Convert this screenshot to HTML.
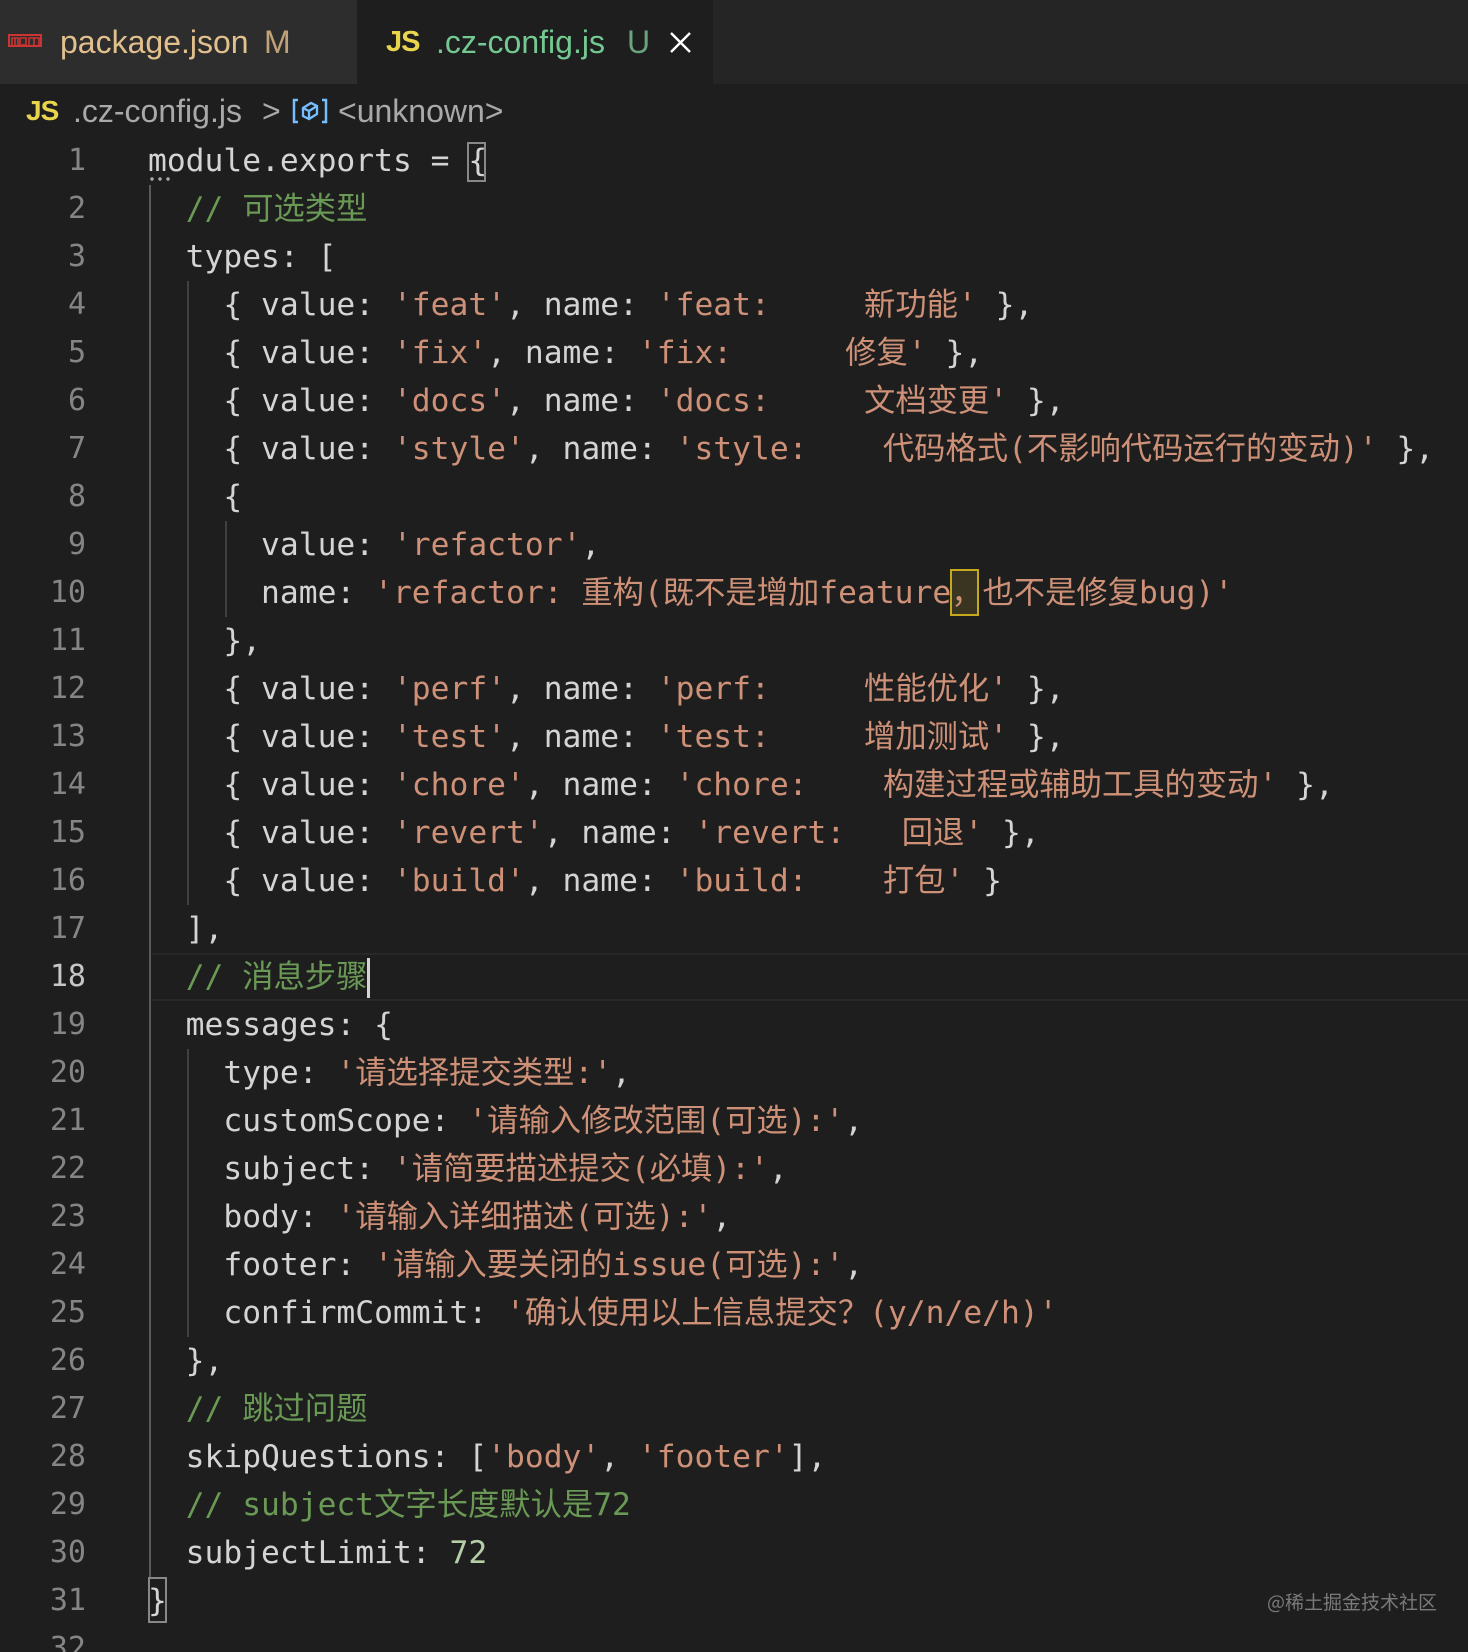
<!DOCTYPE html>
<html><head><meta charset="utf-8"><style>
*{margin:0;padding:0;box-sizing:border-box}
html,body{width:1468px;height:1652px;background:#1e1e1e;overflow:hidden}
body{position:relative;font-family:"Liberation Sans","Noto Sans CJK SC",sans-serif}
.tabbar{position:absolute;left:0;top:0;width:1468px;height:84px;background:#252526}
.tab{position:absolute;top:0;height:84px;font-size:32px;line-height:84px;white-space:nowrap}
.t1{left:0;width:357px;background:#2d2d2d}
.t2{left:357px;width:356px;background:#1e1e1e}
.bc{position:absolute;top:88px;left:0;height:46px;line-height:46px;font-size:32px;color:#a9a9a9;white-space:nowrap}
.js{font-family:"Liberation Sans",sans-serif;font-weight:bold;color:#e8d44d;letter-spacing:-1px}
.code{position:absolute;left:148px;top:137px;font-family:"DejaVu Sans Mono","Noto Sans CJK SC",monospace;font-size:31.3px;color:#d4d4d4}
.l{height:48px;line-height:48px;white-space:pre}
.ln{position:absolute;left:0;width:86px;text-align:right;font-family:"DejaVu Sans Mono",monospace;font-size:30px;color:#858585;top:137px}
.ln div{height:48px;line-height:48px}
.s{color:#ce9178}.c{color:#6a9955}.n{color:#b5cea8}
.g{position:absolute;width:2px;background:#404040}
</style></head><body>
<div class="tabbar">
 <div class="tab t1"><svg style="position:absolute;left:8px;top:34px" width="34" height="14" viewBox="0 0 34 14"><rect x="1" y="1" width="32" height="11" fill="none" stroke="#c33" stroke-width="2"/><path d="M4 11V4h6v7M7 4v7M12 13V4h6v7h-6M21 11V4h10v7M26 4v7" fill="none" stroke="#c33" stroke-width="1.6"/></svg><span style="position:absolute;left:60px;color:#e2c08d">package.json</span><span style="position:absolute;left:264px;color:#c0a27a">M</span></div>
 <div class="tab t2"><span class="js" style="position:absolute;left:29px;font-size:29px">JS</span><span style="position:absolute;left:79px;color:#73c991">.cz-config.js</span><span style="position:absolute;left:270px;color:#6aa57f">U</span><svg style="position:absolute;left:313px;top:32px" width="21" height="21" viewBox="0 0 21 21"><path d="M1 1L20 20M20 1L1 20" stroke="#fff" stroke-width="2.4"/></svg></div>
</div>
<div class="bc"><span class="js" style="position:absolute;left:26px;font-size:28px">JS</span><span style="position:absolute;left:73px">.cz-config.js</span><span style="position:absolute;left:262px">&gt;</span><svg style="position:absolute;left:292px;top:9px" width="36" height="28" viewBox="0 0 36 28"><path d="M6 3H2v22h4M30 3h4v22h-4" fill="none" stroke="#75beff" stroke-width="2.5"/><path d="M11 11l8-5 6 3v8l-8 5-6-3z M11 11l6 3 8-5M17 14v8" fill="none" stroke="#75beff" stroke-width="2.3"/></svg><span style="position:absolute;left:338px">&lt;unknown&gt;</span></div>

<div class="ln">
<div>1</div><div>2</div><div>3</div><div>4</div><div>5</div><div>6</div><div>7</div><div>8</div><div>9</div><div>10</div><div>11</div><div>12</div><div>13</div><div>14</div><div>15</div><div>16</div><div>17</div><div style="color:#c6c6c6">18</div><div>19</div><div>20</div><div>21</div><div>22</div><div>23</div><div>24</div><div>25</div><div>26</div><div>27</div><div>28</div><div>29</div><div>30</div><div>31</div><div>32</div>
</div>

<div style="position:absolute;left:152px;top:953px;width:1316px;height:48px;border-top:2px solid #282828;border-bottom:2px solid #282828"></div>
<div class="g" style="left:149px;top:185px;height:1392px;background:#5a5a5a"></div>
<div class="g" style="left:187px;top:281px;height:624px"></div>
<div class="g" style="left:225px;top:521px;height:96px"></div>
<div class="g" style="left:187px;top:1049px;height:288px"></div>
<div style="position:absolute;left:148px;top:177px;width:24px;height:4px;background:radial-gradient(circle,#aaa 1.5px,transparent 2px) 0 0/8px 4px"></div>
<div style="position:absolute;left:467px;top:142px;width:19px;height:40px;border:2px solid #888"></div>
<div style="position:absolute;left:148px;top:1577px;width:19px;height:46px;border:2px solid #888"></div>
<div style="position:absolute;left:950px;top:569px;width:29px;height:47px;border:2px solid #c5a81e;background:#3a3520"></div>

<div class="code"><div class="l">module.exports = {</div><div class="l">  <span class="c">// 可选类型</span></div><div class="l">  types: [</div><div class="l">    { value: <span class="s">'feat'</span>, name: <span class="s">'feat:     新功能'</span> },</div><div class="l">    { value: <span class="s">'fix'</span>, name: <span class="s">'fix:      修复'</span> },</div><div class="l">    { value: <span class="s">'docs'</span>, name: <span class="s">'docs:     文档变更'</span> },</div><div class="l">    { value: <span class="s">'style'</span>, name: <span class="s">'style:    代码格式(不影响代码运行的变动)'</span> },</div><div class="l">    {</div><div class="l">      value: <span class="s">'refactor'</span>,</div><div class="l">      name: <span class="s">'refactor: 重构(既不是增加feature，也不是修复bug)'</span></div><div class="l">    },</div><div class="l">    { value: <span class="s">'perf'</span>, name: <span class="s">'perf:     性能优化'</span> },</div><div class="l">    { value: <span class="s">'test'</span>, name: <span class="s">'test:     增加测试'</span> },</div><div class="l">    { value: <span class="s">'chore'</span>, name: <span class="s">'chore:    构建过程或辅助工具的变动'</span> },</div><div class="l">    { value: <span class="s">'revert'</span>, name: <span class="s">'revert:   回退'</span> },</div><div class="l">    { value: <span class="s">'build'</span>, name: <span class="s">'build:    打包'</span> }</div><div class="l">  ],</div><div class="l">  <span class="c">// 消息步骤</span><span style="display:inline-block;width:3px;height:40px;background:#d4d4d4;vertical-align:middle"></span></div><div class="l">  messages: {</div><div class="l">    type: <span class="s">'请选择提交类型:'</span>,</div><div class="l">    customScope: <span class="s">'请输入修改范围(可选):'</span>,</div><div class="l">    subject: <span class="s">'请简要描述提交(必填):'</span>,</div><div class="l">    body: <span class="s">'请输入详细描述(可选):'</span>,</div><div class="l">    footer: <span class="s">'请输入要关闭的issue(可选):'</span>,</div><div class="l">    confirmCommit: <span class="s">'确认使用以上信息提交？(y/n/e/h)'</span></div><div class="l">  },</div><div class="l">  <span class="c">// 跳过问题</span></div><div class="l">  skipQuestions: [<span class="s">'body'</span>, <span class="s">'footer'</span>],</div><div class="l">  <span class="c">// subject文字长度默认是72</span></div><div class="l">  subjectLimit: <span class="n">72</span></div><div class="l">}</div></div>

<div style="position:absolute;left:1267px;top:1588px;font-size:19px;line-height:28px;color:#7a7a7a;white-space:nowrap;font-family:'Noto Sans CJK SC',sans-serif">@稀土掘金技术社区</div>
</body></html>
